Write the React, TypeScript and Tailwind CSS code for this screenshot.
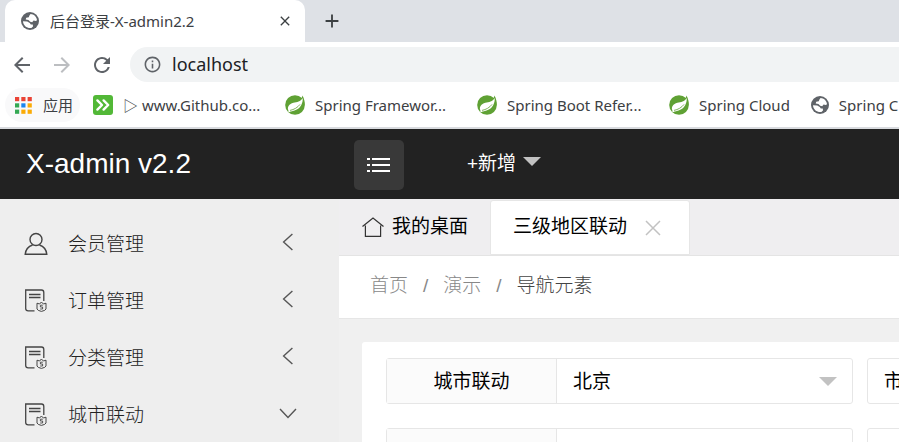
import type { ReactNode } from "react";
import { MdArrowBack, MdArrowForward, MdRefresh, MdInfoOutline, MdClose, MdAdd } from "react-icons/md";

const chromeFont = "font-['Noto_Sans','Noto_Sans_CJK_SC',sans-serif]";
const pageFont = "font-['Liberation_Sans','Noto_Sans_CJK_SC',sans-serif]";

function Globe() {
  return (
    <svg viewBox="0 0 18 18" className="size-[18px] shrink-0" aria-hidden="true">
      <circle cx="9" cy="9" r="9" fill="#5f6368" />
      <path
        d="M9.6 2.1C12.8 2.3 15.6 4.8 16 8.2L14.8 9 12.6 8.6 11.2 10.2 9.2 9.8 7.4 8 4.7 7.6 5.2 5.8 7.8 5.2 8.4 3.4Z"
        fill="#fff"
      />
      <path d="M2 9.2L6.2 9.4 8.8 11 9.8 12.4 11.8 12.6 12 14.6 10.4 16C6 16.6 2.2 13.4 2 9.2Z" fill="#fff" />
    </svg>
  );
}

function SpringLeaf() {
  return (
    <svg viewBox="0 0 20 20" className="size-5 shrink-0" aria-hidden="true">
      <circle cx="10" cy="10" r="9.8" fill="#5fa134" />
      <path d="M17.6 0.6C19.2 4 20 7 19.6 10.5L16 5Z" fill="#5fa134" />
      <path
        d="M17.6 3C15.6 7 12 6.8 8.4 7.8 4 9 2.2 12 3.2 15L4.4 16.8C9 16 14 14.6 16.3 10 17.6 7.4 18 5 17.6 3Z"
        fill="#fff"
      />
      <path d="M5 15.4C9 14.6 12.6 12.6 15 9.4" fill="none" stroke="#5fa134" strokeWidth="0.8" />
      <circle cx="4.2" cy="16.2" r="0.9" fill="#fff" />
    </svg>
  );
}

function GreenArrows() {
  return (
    <svg viewBox="0 0 20 20" className="size-5 shrink-0" aria-hidden="true">
      <rect width="20" height="20" rx="3" fill="#52b837" />
      <path
        d="M4.4 5.4L9 10 4.4 14.6M10.6 5.4L15.2 10 10.6 14.6"
        fill="none"
        stroke="#fff"
        strokeWidth="2.4"
        strokeLinecap="round"
        strokeLinejoin="round"
      />
    </svg>
  );
}

const appDots = [
  ["#ea4335", "#ea4335", "#ea4335"],
  ["#34a853", "#1a85f0", "#fbab05"],
  ["#34a853", "#fbab05", "#fbab05"],
];

function AppsGrid() {
  return (
    <svg viewBox="0 0 17 17" className="size-[17px] shrink-0" aria-hidden="true">
      {appDots.map((row, y) =>
        row.map((fill, x) => <rect key={`${x}-${y}`} x={x * 6.3} y={y * 6.3} width="4.2" height="4.2" fill={fill} />),
      )}
    </svg>
  );
}

function UserIcon() {
  return (
    <svg viewBox="0 0 24 24" className="size-6 shrink-0" fill="none" stroke="#444" strokeWidth="1.4" aria-hidden="true">
      <circle cx="12" cy="7.5" r="6" />
      <path d="M8.6 13C4.4 14.4 1.6 18 1.2 22.3H22.8C22.4 18 19.6 14.4 15.4 13" />
    </svg>
  );
}

function OrderIcon() {
  return (
    <svg viewBox="0 0 24 24" className="size-6 shrink-0" fill="none" stroke="#444" strokeWidth="1.3" aria-hidden="true">
      <path d="M10.5 21.8H4.2Q1.7 21.8 1.7 19.4V1H17.5Q19.8 1 19.8 3.4V12" />
      <path d="M5 5.4H16.5M5 8.6H16.5" strokeWidth="1.5" />
      <path d="M13 14.2L15.6 15 17.4 13 19.4 15 22 14.2V20Q21.6 21.6 17.4 22.4 13.4 21.6 13 20Z" strokeWidth="1" />
      <path d="M18.8 16.2H16.4V18H18.6V20H16.2" strokeWidth="0.9" />
    </svg>
  );
}

function Chevron({ open }: { open?: boolean }) {
  return (
    <svg viewBox="0 0 18 18" className="size-[18px] shrink-0" fill="none" stroke="#555" strokeWidth="1.4" aria-hidden="true">
      <path d={open ? "M1 5L9 13.4 17 5" : "M13.4 1L4.6 9 13.4 17"} />
    </svg>
  );
}

function Caret() {
  return (
    <svg viewBox="0 0 18 9" className="h-[9px] w-[18px] shrink-0" aria-hidden="true">
      <path d="M0 0H18L9 9Z" fill="#c2c2c2" />
    </svg>
  );
}

function Bookmark({ icon, wide, children }: { icon: ReactNode; wide?: boolean; children: ReactNode }) {
  return (
    <a href="#" className={`flex shrink-0 items-center gap-[10px] whitespace-nowrap ${wide ? "w-[171px]" : ""}`}>
      {icon}
      <span>{children}</span>
    </a>
  );
}

function Browser() {
  return (
    <div className={`${chromeFont} text-[#3c4043]`}>
      <div className="flex h-[42px] bg-[#dee1e6]">
        <div className="ml-[5px] flex w-[300px] items-center rounded-t-[10px] bg-white pr-3 pl-4 text-[15px]">
          <Globe />
          <span className="ml-[11px] flex-1 whitespace-nowrap">后台登录-X-admin2.2</span>
          <button type="button" aria-label="关闭标签页">
            <MdClose className="size-4" />
          </button>
        </div>
        <button type="button" aria-label="新标签页" className="ml-4">
          <MdAdd className="size-[22px]" />
        </button>
      </div>
      <div className="flex h-[45px] items-center bg-white pl-[10px] text-[#5f6368]">
        <button type="button" aria-label="后退">
          <MdArrowBack className="size-6" />
        </button>
        <button type="button" aria-label="前进" className="ml-4 text-[#bcbec1]">
          <MdArrowForward className="size-6" />
        </button>
        <button type="button" aria-label="刷新" className="ml-4">
          <MdRefresh className="size-6" />
        </button>
        <div className="ml-4 flex h-[35px] flex-1 items-center rounded-l-full bg-[#f1f3f4] pl-[13px]">
          <MdInfoOutline className="size-[19px] shrink-0" />
          <input
            aria-label="地址"
            defaultValue="localhost"
            className="ml-[10px] min-w-0 flex-1 bg-transparent text-[18px] text-[#202124] outline-none"
          />
        </div>
      </div>
      <nav className="flex h-[42px] items-center gap-[21px] overflow-hidden border-b-2 border-[#d9dbdf] bg-white pb-1 pl-[5px] text-[15px]">
        <a href="#" className="-mr-2 flex h-[34px] shrink-0 items-center gap-[11px] rounded-full bg-[#f9f9fa] pr-[7px] pl-[10px]">
          <AppsGrid />
          <span>应用</span>
        </a>
        <Bookmark wide icon={<GreenArrows />}>▷ www.Github.co...</Bookmark>
        <Bookmark wide icon={<SpringLeaf />}>Spring Framewor...</Bookmark>
        <Bookmark wide icon={<SpringLeaf />}>Spring Boot Refer...</Bookmark>
        <Bookmark icon={<SpringLeaf />}>Spring Cloud</Bookmark>
        <Bookmark icon={<Globe />}>Spring C</Bookmark>
      </nav>
    </div>
  );
}

const menu = [
  { label: "会员管理", icon: <UserIcon />, open: false },
  { label: "订单管理", icon: <OrderIcon />, open: false },
  { label: "分类管理", icon: <OrderIcon />, open: false },
  { label: "城市联动", icon: <OrderIcon />, open: true },
];

function SelectBox({ value, label }: { value?: string; label: string }) {
  return (
    <span className="grid flex-1 items-center">
      <select
        aria-label={label}
        className="col-start-1 row-start-1 h-full w-full appearance-none bg-transparent pt-[3px] pl-4 outline-none"
      >
        <option>{value}</option>
      </select>
      <span className="pointer-events-none col-start-1 row-start-1 mr-[15px] justify-self-end">
        <Caret />
      </span>
    </span>
  );
}

function FieldRow({ label, province, city }: { label?: string; province?: string; city?: string }) {
  return (
    <div className="flex shrink-0 gap-[14px]">
      <label className="flex h-[46px] w-[467px] shrink-0 rounded-[3px] border border-[#e6e6e6]">
        <span className="flex w-[170px] items-center justify-center border-r border-[#e6e6e6] bg-[#fbfbfb] pt-[3px]">
          {label}
        </span>
        <SelectBox value={province} label="省" />
      </label>
      <div className="flex h-[46px] w-[297px] shrink-0 rounded-[3px] border border-[#e6e6e6]">
        <SelectBox value={city} label="市" />
      </div>
    </div>
  );
}

export default function App() {
  return (
    <div className="flex h-screen flex-col overflow-hidden">
      <Browser />
      <header className={`${pageFont} flex h-[70px] shrink-0 items-center bg-[#222] text-white`}>
        <h1 className="w-[354px] pl-[26px] text-[28px]">X-admin v2.2</h1>
        <button
          type="button"
          aria-label="菜单"
          className="mt-[2px] flex size-[50px] items-center justify-center rounded-[5px] bg-[#393939]"
        >
          <svg viewBox="0 0 24 16" className="h-4 w-6" stroke="#fff" strokeWidth="1.8" aria-hidden="true">
            <path d="M0 2H3M5 2H23M0 8H3M5 8H23M0 14H3M5 14H23" />
          </svg>
        </button>
        <button type="button" className="ml-[63px] flex items-center gap-[7px] text-[19px]">
          +新增
          <span className="mb-[5px]">
            <Caret />
          </span>
        </button>
      </header>
      <div className={`${pageFont} flex min-h-0 flex-1 text-[19px] text-black`}>
        <nav className="w-[339px] shrink-0 bg-[#eee] pt-4 font-light text-[#222]">
          {menu.map((item) => (
            <a key={item.label} href="#" className="flex h-[57px] items-center pr-[42px] pl-6">
              {item.icon}
              <span className="ml-5 flex-1 pt-[3px]">{item.label}</span>
              <span className="mb-1">
                <Chevron open={item.open} />
              </span>
            </a>
          ))}
        </nav>
        <main className="flex min-w-0 flex-1 flex-col overflow-hidden bg-[#f0f0f0]">
          <div className="flex h-[57px] shrink-0 items-stretch border-b border-[#e4e4e4] bg-[#efeef0] pt-px">
            <button type="button" className="flex w-[151px] items-center gap-2 pl-[23px]">
              <svg viewBox="0 0 22 22" className="size-[22px] shrink-0" fill="none" stroke="#333" strokeWidth="1.2" aria-hidden="true">
                <path d="M0.5 9.5L11 1 21.5 9.5M3.4 8.5V19.4H18.6V8.5" />
              </svg>
              我的桌面
            </button>
            <div className="flex w-[200px] items-center rounded-t-[3px] border border-[#e6e6e6] bg-white pl-[22px]">
              <span className="flex-1">三级地区联动</span>
              <button type="button" aria-label="关闭" className="mr-7">
                <svg viewBox="0 0 16 16" className="size-4" stroke="#c2c2c2" strokeWidth="1.5" aria-hidden="true">
                  <path d="M1 1L15 15M15 1L1 15" />
                </svg>
              </button>
            </div>
          </div>
          <nav className="flex h-[63px] shrink-0 items-center gap-[15px] border-b border-[#e6e6e6] bg-white pb-[2px] pl-[31px] font-light text-[#888]">
            <a href="#">首页</a>
            <span>/</span>
            <a href="#">演示</a>
            <span>/</span>
            <span className="text-[#444]">导航元素</span>
          </nav>
          <div className="mt-[23px] ml-[23px] flex flex-1 flex-col gap-6 overflow-hidden rounded-tl-[3px] bg-white pt-4 pl-6">
            <FieldRow label="城市联动" province="北京" city="市辖区" />
            <FieldRow />
          </div>
        </main>
      </div>
    </div>
  );
}
